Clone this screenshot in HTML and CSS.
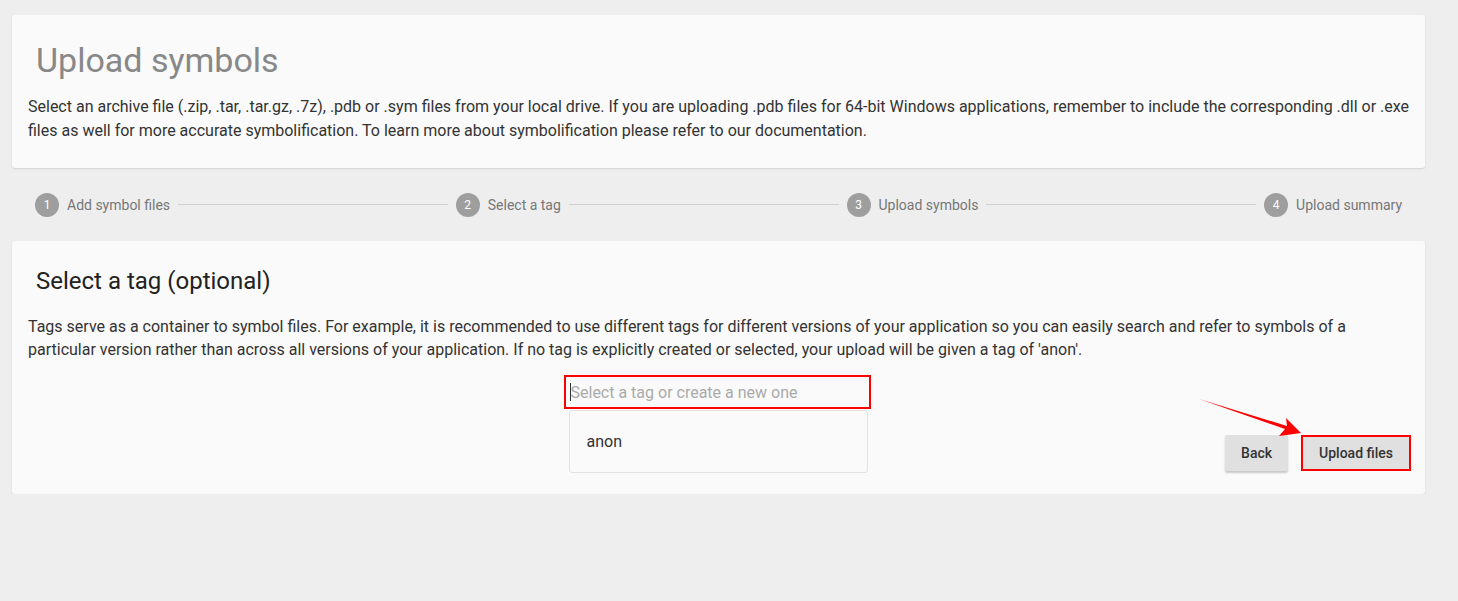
FILE: index.html
```html
<!DOCTYPE html>
<html lang="en">
<head>
	<meta charset="UTF-8">
	<title>Upload symbols</title>
	<link rel="stylesheet" href="styles.css">
</head>
<body>

	<div class="page">
		<section class="card intro">
			<h1 class="intro-title">Upload symbols</h1>
			<p class="intro-text">Select an archive file (.zip, .tar, .tar.gz, .7z), .pdb or .sym files from your local drive. If you are uploading .pdb files for 64-bit Windows applications, remember to include the corresponding .dll or .exe files as well for more accurate symbolification. To learn more about symbolification please refer to our documentation.</p>
		</section>

		<div class="stepper">
			<div class="step"><span class="step-num">1</span><span class="step-label">Add symbol files</span></div>
			<div class="step-line"></div>
			<div class="step"><span class="step-num">2</span><span class="step-label">Select a tag</span></div>
			<div class="step-line"></div>
			<div class="step"><span class="step-num">3</span><span class="step-label">Upload symbols</span></div>
			<div class="step-line"></div>
			<div class="step"><span class="step-num">4</span><span class="step-label">Upload summary</span></div>
		</div>

		<section class="card tag-card">
			<h2 class="tag-title">Select a tag (optional)</h2>
			<p class="tag-text">Tags serve as a container to symbol files. For example, it is recommended to use different tags for different versions of your application so you can easily search and refer to symbols of a particular version rather than across all versions of your application. If no tag is explicitly created or selected, your upload will be given a tag of 'anon'.</p>

			<div class="tag-field">
				<div class="tag-input marked">
					<span class="caret"></span><span class="placeholder">Select a tag or create a new one</span>
				</div>
				<ul class="tag-menu">
					<li>anon</li>
				</ul>
			</div>

			<div class="actions">
				<button class="btn">Back</button>
				<span class="marked btn-wrap"><button class="btn">Upload files</button></span>
			</div>
		</section>

		<!-- pointer to the upload button -->
		<svg class="pointer" width="120" height="50" viewBox="0 0 120 50">
			<polygon points="0,9 88,36 87,28 102,43 80,46 86,39" fill="#ff0000"/>
		</svg>
	</div>

</body>
</html>
```

FILE: styles.css
```css
html, body {
	margin: 0;
	background: #eeeeee;
}
body {
	font-family: Roboto, "Noto Sans", sans-serif;
	color: #333;
}
.page {
	position: relative;
	width: 1413px;
	padding: 15px 0 0 12px;
}
.card {
	background: #fafafa;
	border-radius: 3px;
	box-shadow: 0 1px 2px rgba(0,0,0,0.12);
}
.intro {
	padding: 25px 16px 25px 16px;
}
.intro-title {
	margin: 0 0 15px 8px;
	font-size: 34px;
	font-weight: 400;
	line-height: 40px;
	color: #888;
}
.intro-text, .tag-text {
	margin: 0 -5px 0 0;
	font-size: 16px;
	line-height: 24px;
	color: #333;
}

.stepper {
	display: flex;
	align-items: center;
	height: 73px;
	padding: 0 23px;
}
.step {
	display: flex;
	align-items: center;
}
.step-num {
	width: 24px;
	height: 24px;
	border-radius: 50%;
	background: #9e9e9e;
	color: #fff;
	font-size: 12px;
	line-height: 24px;
	text-align: center;
	margin-right: 8px;
}
.step-label {
	font-size: 14px;
	color: #777;
}
.step-line {
	flex: 1;
	height: 1px;
	background: #cfcfcf;
	margin: 0 8px;
}

.tag-card {
	padding: 25px 16px 23px 16px;
}
.tag-title {
	margin: 0 0 19px 8px;
	font-size: 24px;
	font-weight: 400;
	line-height: 30px;
	color: #222;
}
.tag-text {
	line-height: 23px;
}
.tag-field {
	position: relative;
	width: 307px;
	margin: 14px 0 0 calc(50% - 155px);
}
.tag-input {
	height: 30px;
	display: flex;
	align-items: center;
	padding-left: 4px;
	font-size: 16px;
}
.marked {
	border: 2px solid #ff0000;
}
.caret {
	width: 1px;
	height: 18px;
	background: #333;
}
.placeholder {
	color: #aaa;
}
.tag-menu {
	position: absolute;
	left: 5px;
	top: 35px;
	width: 297px;
	height: 61px;
	margin: 0;
	padding: 0;
	list-style: none;
	background: #fafafa;
	border: 1px solid #e2e2e2;
	border-radius: 3px;
}
.tag-menu li {
	padding: 0 17px;
	line-height: 61px;
	font-size: 16px;
	color: #333;
}

.actions {
	display: flex;
	justify-content: flex-end;
	align-items: center;
	gap: 13px;
	margin: 26px -2px 0 0;
}
.btn {
	height: 36px;
	padding: 0 16px;
	border: none;
	border-radius: 2px;
	background: #e0e0e0;
	font-family: Roboto, sans-serif;
	font-size: 14px;
	font-weight: 500;
	color: #333;
	box-shadow: 0 2px 2px rgba(0,0,0,0.2);
}
.btn-wrap {
	display: block;
}
.btn-wrap .btn {
	display: block;
	height: 32px;
	box-shadow: none;
}
.pointer {
	position: absolute;
	left: 1199px;
	top: 390px;
}
```
